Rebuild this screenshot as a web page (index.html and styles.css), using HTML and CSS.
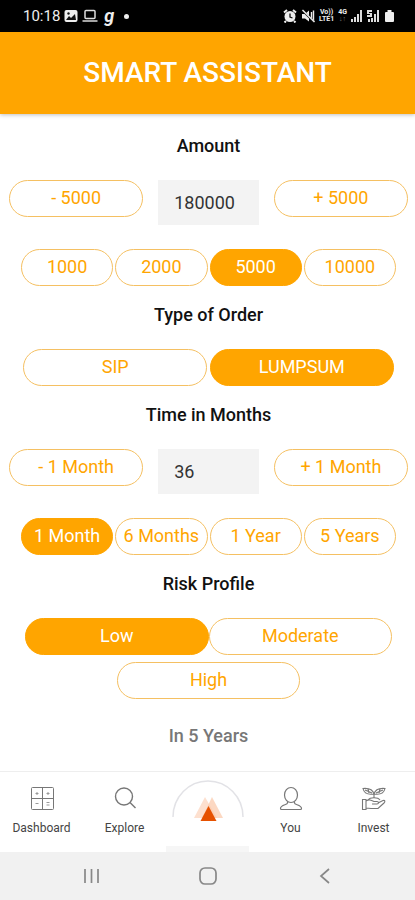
FILE: index.html
```html
<!DOCTYPE html>
<html lang="en">
<head>
  <meta charset="UTF-8" />
  <meta name="viewport" content="width=device-width, initial-scale=1.0" />
  <title>Smart Assistant</title>
  <link rel="stylesheet" href="styles.css">
</head>
<body>
  <!-- Status bar -->
  <div class="status-bar">
    <div class="status-left">
      <span class="clock">10:18</span>
      <svg width="14" height="14" viewBox="0 0 14 14"><rect x="0.5" y="1" width="13" height="12" rx="2" fill="#eee"/><path d="M2 11l3-4 2 2 4-4 1 6z" fill="#111"/><circle cx="4.5" cy="4.5" r="1.2" fill="#111"/></svg>
      <svg width="16" height="14" viewBox="0 0 16 14" fill="none" stroke="#ddd" stroke-width="1.5"><rect x="3" y="1.5" width="10" height="8" rx="1"/><path d="M0.5 12h15"/></svg>
      <span class="g-mark">g</span>
      <span class="dot"></span>
    </div>
    <div class="status-right">
      <svg width="14" height="14" viewBox="0 0 14 14"><circle cx="7" cy="7.5" r="5.5" fill="#eee"/><path d="M1 3.5L4 1M13 3.5L10 1M3 12l-1.5 1.5M11 12l1.5 1.5" stroke="#eee" stroke-width="2"/><path d="M7 4.5v3.5l2.5 1" fill="none" stroke="#111" stroke-width="1.3"/></svg>
      <svg width="14" height="14" viewBox="0 0 14 14"><path d="M1 5h3l4-3.5v11L4 9.5H1z" fill="#eee"/><path d="M10.5 3v8M12.500 1.500v11" stroke="#eee" stroke-width="1.4"/><path d="M1 1l12 12" stroke="#111" stroke-width="2"/><path d="M1.5 1l12 12" stroke="#eee" stroke-width="1.4"/></svg>
      <span class="net">Vo))<br>LTE1</span>
      <span class="net">4G<br><span class="dim">↓↑</span></span>
      <svg width="12" height="14" viewBox="0 0 12 14" fill="#ddd"><path d="M0 10h2v3H0zM3 8h2v5H3zM6 5h2v8H6zM9 1h2v12H9z"/></svg>
      <svg width="13" height="14" viewBox="0 0 13 14" fill="#ddd"><path d="M0 1h5v2H2v1h3v4H0V6h3V5H0zM1 10h2v3H1zM4 9h2v4H4zM7 5h2v8H7zM10 1h2v12h-2z"/></svg>
      <svg width="11" height="14" viewBox="0 0 11 14" fill="#eee"><path d="M3.5 1h4v2H9a1 1 0 0 1 1 1v8a1 1 0 0 1-1 1H2a1 1 0 0 1-1-1V4a1 1 0 0 1 1-1h1.500z"/></svg>
    </div>
  </div>

  <header class="header">
    <h1>SMART ASSISTANT</h1>
  </header>

  <main class="content">
    <!-- Amount -->
    <section class="section">
      <h2><label for="amount">Amount</label></h2>
      <div class="stepper">
        <button type="button" class="pill" data-target="amount" data-step="-5000">- 5000</button>
        <input type="text" id="amount" class="field" inputmode="numeric" value="180000">
        <button type="button" class="pill" data-target="amount" data-step="5000">+ 5000</button>
      </div>
      <div class="chips">
        <button type="button" class="pill">1000</button>
        <button type="button" class="pill">2000</button>
        <button type="button" class="pill active">5000</button>
        <button type="button" class="pill">10000</button>
      </div>
    </section>

    <!-- Order type -->
    <section class="section">
      <h2>Type of Order</h2>
      <div class="options">
        <button type="button" class="pill">SIP</button>
        <button type="button" class="pill active">LUMPSUM</button>
      </div>
    </section>

    <!-- Time -->
    <section class="section">
      <h2><label for="months">Time in Months</label></h2>
      <div class="stepper">
        <button type="button" class="pill" data-target="months" data-step="-1">- 1 Month</button>
        <input type="text" id="months" class="field" inputmode="numeric" value="36">
        <button type="button" class="pill" data-target="months" data-step="1">+ 1 Month</button>
      </div>
      <div class="chips">
        <button type="button" class="pill active">1 Month</button>
        <button type="button" class="pill">6 Months</button>
        <button type="button" class="pill">1 Year</button>
        <button type="button" class="pill">5 Years</button>
      </div>
    </section>

    <!-- Risk -->
    <section class="section">
      <h2>Risk Profile</h2>
      <div class="options risk">
        <button type="button" class="pill active">Low</button>
        <button type="button" class="pill">Moderate</button>
        <button type="button" class="pill">High</button>
      </div>
    </section>

    <p class="result-title">In 5 Years</p>
  </main>

  <!-- Tab bar -->
  <nav class="tab-bar">
    <a href="#" class="tab">
      <svg width="26" height="26" viewBox="0 0 26 26" fill="none" stroke="#777" stroke-width="1"><rect x="2.5" y="1.5" width="22" height="22" rx="1"/><path d="M13.500 1.500v22M2.500 12.500h22"/><path d="M6.500 7.500h3M8 6v3M17.500 7.500h3M19 6v3M6.500 17.500h3M17.500 16.500h3M17.500 19h3" stroke="#999"/></svg>
      <span>Dashboard</span>
    </a>
    <a href="#" class="tab">
      <svg width="26" height="26" viewBox="0 0 26 26" fill="none" stroke="#777" stroke-width="1.4"><circle cx="12" cy="10.500" r="8.500"/><path d="M18 16.500l5.500 5.500"/></svg>
      <span>Explore</span>
    </a>
    <a href="#" class="tab tab-home" aria-label="Smart Assistant">
      <svg width="72" height="46" viewBox="0 0 72 46"><path d="M1 37a35 36 0 0 1 70 0" fill="#fff" stroke="#e2e2e6" stroke-width="1.5"/><path d="M33 17l12 21H22z" fill="#fde0cf"/><path d="M40 17l11 21H30z" fill="#fbc8a8" opacity="0.7"/><path d="M36.500 26l8 15h-16z" fill="#e65100"/></svg>
    </a>
    <a href="#" class="tab">
      <svg width="26" height="26" viewBox="0 0 26 26" fill="none" stroke="#777" stroke-width="1.2"><ellipse cx="13" cy="9" rx="6.500" ry="7.500"/><path d="M9.500 15.500v1.500c0 2-7 1.500-7 5.500 0 .6.500 1 1 1h19c.5 0 1-.4 1-1 0-4-7-3.500-7-5.500v-1.500"/></svg>
      <span>You</span>
    </a>
    <a href="#" class="tab">
      <svg width="26" height="26" viewBox="0 0 26 26" fill="none" stroke="#777" stroke-width="1.1"><path d="M13 12V8M13 8C12 4 8 2 2 2.500 3 7 7 9 13 8zM13 8c1-4 5-6 11-5.500C23 7 19 9 13 8zM4 4l7 3M22 4l-7 3M7 3l1 4M19 3l-1 4"/><path d="M7 14c2-3 10-3 12 0M1.500 13.500H5v10H1.500zM5 15c3-2 5-1 8 .5h3c2 0 2 2.500 0 2.500h-5M17 17l5-2.500c2-.5 2.500 1 1 2.500l-6 5.500H10L5 22"/></svg>
      <span>Invest</span>
    </a>
  </nav>

  <!-- System navigation -->
  <div class="system-nav">
    <button type="button" aria-label="Recent apps">
      <svg width="20" height="20" viewBox="0 0 20 20" stroke="#888" stroke-width="1.7"><path d="M4 3v14M10.500 3v14M17 3v14"/></svg>
    </button>
    <button type="button" aria-label="Home">
      <svg width="20" height="20" viewBox="0 0 20 20" fill="none" stroke="#888" stroke-width="1.7"><rect x="3" y="2" width="16" height="16" rx="5"/></svg>
    </button>
    <button type="button" aria-label="Back">
      <svg width="20" height="20" viewBox="0 0 20 20" fill="none" stroke="#888" stroke-width="1.7"><path d="M15 3l-8 7 8 7"/></svg>
    </button>
  </div>

  <script>
    // Plus / minus buttons
    document.querySelectorAll('[data-step]').forEach(btn => {
      btn.addEventListener('click', () => {
        const input = document.getElementById(btn.dataset.target);
        input.value = Math.max(0, Number(input.value) + Number(btn.dataset.step));
      });
    });

    // One active button per group
    document.querySelectorAll('.chips, .options').forEach(group => {
      group.addEventListener('click', (e) => {
        if (e.target.classList.contains('pill')) {
          group.querySelectorAll('.pill').forEach(pill => pill.classList.remove('active'));
          e.target.classList.add('active');
        }
      });
    });
  </script>
</body>
</html>
```
FILE: styles.css
```css
* {
  box-sizing: border-box;
}

body {
  font-family: Roboto, sans-serif;
  margin: 0;
  min-height: 100vh;
  display: flex;
  flex-direction: column;
  background-color: #fff;
}

svg {
  display: block;
  flex-shrink: 0;
}

/* Status bar */
.status-bar {
  height: 32px;
  padding: 0 20px 0 23px;
  display: flex;
  align-items: center;
  justify-content: space-between;
  background-color: #000;
  color: #eee;
}

.status-left,
.status-right {
  display: flex;
  align-items: center;
  gap: 4px;
}

.clock {
  font-size: 15px;
}

.g-mark {
  font-size: 18px;
  line-height: 18px;
  font-style: italic;
  font-weight: bold;
  margin-left: 2px;
}

.dot {
  width: 5px;
  height: 5px;
  margin-left: 6px;
  border-radius: 50%;
  background-color: #eee;
}

.net {
  font-size: 7px;
  line-height: 7px;
  font-weight: bold;
  text-align: center;
}

.dim {
  color: #777;
}

/* Header */
.header {
  height: 82px;
  padding-bottom: 2px;
  display: flex;
  align-items: center;
  justify-content: center;
  background-color: #ffa500;
  box-shadow: 0 1px 4px rgb(0 0 0 / 0.25);
}

.header h1 {
  margin: 0;
  font-size: 28px;
  font-weight: 500;
  color: #fff;
}

/* Form */
.content {
  flex: 1;
  padding: 3px 7px 23px 9px;
}

.section {
  padding-top: 17px;
}

.section h2,
.result-title {
  margin: 0;
  font-size: 18px;
  line-height: 24px;
  font-weight: 500;
  text-align: center;
  color: #111;
}

.section h2 {
  margin-bottom: 22px;
}

.result-title {
  margin-top: 25px;
  color: #777;
}

.pill {
  height: 37px;
  padding: 0 0 2px;
  border: 1px solid #f5c062;
  border-radius: 19px;
  background-color: #fff;
  font-family: inherit;
  font-size: 18px;
  color: #ffa500;
  white-space: nowrap;
  cursor: pointer;
}

.pill.active {
  border-color: #ffa500;
  background-color: #ffa500;
  color: #fff;
}

.stepper {
  display: grid;
  grid-template-columns: 4fr 3fr 4fr;
  gap: 15px;
  align-items: start;
  margin-bottom: 24px;
}

.field {
  width: 100%;
  height: 45px;
  padding: 0 16px;
  border: none;
  background-color: #f3f3f3;
  font-family: inherit;
  font-size: 18px;
  color: #333;
}

.chips {
  display: grid;
  grid-template-columns: repeat(4, 1fr);
  gap: 2px;
  padding: 0 12px;
}

.options {
  display: flex;
  flex-wrap: wrap;
  justify-content: center;
  gap: 7px 3px;
}

.options .pill {
  width: 46%;
}

.options.risk {
  column-gap: 0;
}

/* Tab bar */
.tab-bar {
  height: 81px;
  display: grid;
  grid-template-columns: repeat(5, 1fr);
  border-top: 1px solid #eee;
}

.tab {
  padding-top: 14px;
  display: flex;
  flex-direction: column;
  align-items: center;
  gap: 7px;
  font-size: 12px;
  line-height: 18px;
  color: #444;
  text-decoration: none;
}

.tab-home {
  padding-top: 8px;
  border-bottom: 6px solid #f6f6f6;
}

/* System navigation */
.system-nav {
  height: 48px;
  padding: 0 8%;
  display: grid;
  grid-template-columns: repeat(3, 1fr);
  align-items: center;
  justify-items: center;
  background-color: #f1f1f1;
}

.system-nav button {
  padding: 0;
  border: none;
  background: none;
}
```
